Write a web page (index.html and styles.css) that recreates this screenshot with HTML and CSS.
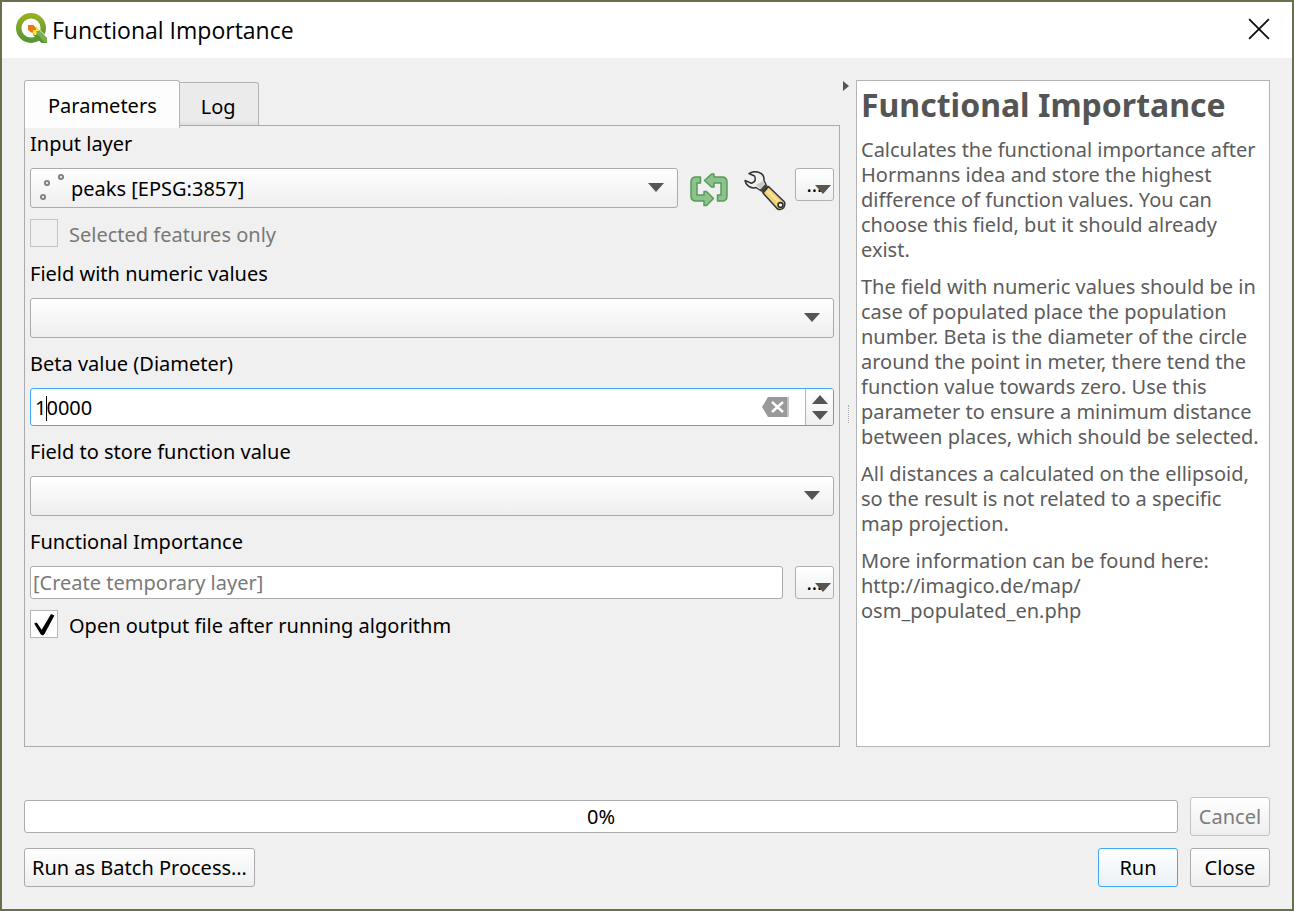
FILE: index.html
```html
<!DOCTYPE html>
<html lang="en">
<head>
<meta charset="utf-8">
<title>Functional Importance</title>
<link rel="stylesheet" href="styles.css">
</head>
<body>
<main class="window">
  <header class="titlebar">
    <svg class="logo" viewBox="0 0 32 32" aria-hidden="true">
      <defs><linearGradient id="g" x1="0" y1="0" x2="0" y2="1"><stop offset="0" stop-color="#93b023"/><stop offset="1" stop-color="#589632"/></linearGradient></defs>
      <circle cx="16" cy="15" r="12.300" fill="none" stroke="url(#g)" stroke-width="5.400"/>
      <path d="M17 19l5-5 10 10v7h-5z" fill="#fff"/>
      <path d="M18 18v4l8.500 8H32v-5l-8-8h-4z" fill="#589632"/>
      <path d="M19 18l3-2.500L32 25.500V29l-2 .5z" fill="#7dac54"/>
      <path d="M16 16h5v-3l3 3v2h-2.500v4H19l-3-3z" fill="#f0e64a"/>
      <path d="M13 12h5.500l2.500 3v2h-3v2.500h-2L13 17z" fill="#ee7913"/>
    </svg>
    <h1 class="title">Functional Importance</h1>
    <button class="close-x" type="button" aria-label="Close window">
      <svg viewBox="0 0 20 20" aria-hidden="true"><path d="M1 1l18 18M19 1L1 19" stroke="#111" stroke-width="1.700"/></svg>
    </button>
  </header>

  <div class="content">
    <div class="columns">
      <section class="left">
        <div class="tabs" role="tablist">
          <button class="tab active" type="button" role="tab" aria-selected="true">Parameters</button>
          <button class="tab" type="button" role="tab" aria-selected="false">Log</button>
        </div>
        <div class="panel" role="tabpanel">
          <div class="field">
            <label for="layer">Input layer</label>
            <div class="row">
              <div class="combo with-icon">
                <select id="layer"><option>peaks [EPSG:3857]</option></select>
                <svg class="points" viewBox="0 0 24 28" aria-hidden="true"><g fill="none" stroke="#858585" stroke-width="2"><circle cx="3" cy="23" r="2.100"/><circle cx="7" cy="9" r="2.100"/><circle cx="21" cy="3" r="2.100"/></g></svg>
                <svg class="arrow" viewBox="0 0 16 9" aria-hidden="true"><path d="M0 0h16L8 9z"/></svg>
              </div>
              <button class="tool" type="button" aria-label="Iterate over this layer">
                <svg class="iterate" viewBox="0 0 38 34" aria-hidden="true">
                  <g fill="#8ec28d" stroke="#569b59" stroke-width="1.500" stroke-linejoin="round">
                    <path d="M10.500 4H6Q1 4 1 9V23Q1 28 6 28H14V32.500h2.500L23.500 25.500 16.500 18.500H14V22H7V10h3.500z"/>
                    <path d="M27.500 28H32Q37 28 37 23V9Q37 4 32 4H24V1h-2.500L14.500 7.500 21.500 14H24V10h7V22h-3.500z"/>
                  </g>
                </svg>
              </button>
              <button class="tool" type="button" aria-label="Advanced options">
                <svg class="wrench" viewBox="0 0 42 40" aria-hidden="true">
                  <path d="M1 9.500Q2 14 6 16q3 1.500 6 .5l4.500 3L22 13.500l-2-4Q20.500 3 14.500 1.200 9 -.3 5 2.500L10.500 5Q12 8 10.500 10.500L7.500 12.300z" fill="#f0f0ee" stroke="#333" stroke-width="1.500" stroke-linejoin="round"/>
                  <path d="M12 14l5 4 4-5-2-3z" fill="#c9c9c5"/>
                  <path d="M16 19.500l5.500-6.500 3.500 3-5.500 6.500z" fill="#444"/>
                  <path d="M19 22l5.500-6.500 16 15.500q1 3-1 6-3 2.500-6 1z" fill="#f0d477" stroke="#333" stroke-width="1.500" stroke-linejoin="round"/>
                  <path d="M23.500 20l11 10.500" stroke="#f8e59c" stroke-width="2"/>
                  <circle cx="36.500" cy="34" r="2.400" fill="#fff" stroke="#333" stroke-width="1.700"/>
                </svg>
              </button>
              <button class="more" type="button" aria-label="More input options">…<svg viewBox="0 0 16 9" aria-hidden="true"><path d="M0 0h16L8 9z"/></svg></button>
            </div>
          </div>
          <label class="check disabled"><input type="checkbox" disabled>Selected features only</label>
          <div class="field">
            <label for="numeric">Field with numeric values</label>
            <div class="combo">
              <select id="numeric"><option></option></select>
              <svg class="arrow" viewBox="0 0 16 9" aria-hidden="true"><path d="M0 0h16L8 9z"/></svg>
            </div>
          </div>
          <div class="field">
            <label for="beta">Beta value (Diameter)</label>
            <div class="spin">
              <div class="entry">
                <input id="beta" type="text" value="10000">
                <span class="caret"></span>
              </div>
              <button class="clear" type="button" aria-label="Clear value">
                <svg viewBox="0 0 27 20" aria-hidden="true"><path d="M0 10L6 0h21v20H6z" fill="#999"/><path d="M25 0h2v20h-2z" fill="#c4c4c4"/><path d="M10 5l11 10M21 5L10 15" stroke="#fff" stroke-width="2.500"/></svg>
              </button>
              <div class="steps">
                <button type="button" aria-label="Increase"><svg viewBox="0 0 16 9" aria-hidden="true"><path d="M0 9h16L8 0z"/></svg></button>
                <button type="button" aria-label="Decrease"><svg viewBox="0 0 16 9" aria-hidden="true"><path d="M0 0h16L8 9z"/></svg></button>
              </div>
            </div>
          </div>
          <div class="field">
            <label for="store">Field to store function value</label>
            <div class="combo">
              <select id="store"><option></option></select>
              <svg class="arrow" viewBox="0 0 16 9" aria-hidden="true"><path d="M0 0h16L8 9z"/></svg>
            </div>
          </div>
          <div class="field">
            <label for="output">Functional Importance</label>
            <div class="row">
              <input class="output" id="output" type="text" placeholder="[Create temporary layer]">
              <button class="more" type="button" aria-label="More output options">…<svg viewBox="0 0 16 9" aria-hidden="true"><path d="M0 0h16L8 9z"/></svg></button>
            </div>
          </div>
          <label class="check"><input type="checkbox" checked>Open output file after running algorithm</label>
        </div>
      </section>

      <div class="splitter">
        <button class="collapse" type="button" aria-label="Collapse help"><svg viewBox="0 0 6 10" aria-hidden="true"><path d="M0 0l6 5-6 5z"/></svg></button>
        <span class="grip"></span>
      </div>

      <article class="help">
        <h2>Functional Importance</h2>
        <p>Calculates the functional importance after<br>Hormanns idea and store the highest<br>difference of function values. You can<br>choose this field, but it should already<br>exist.</p>
        <p>The field with numeric values should be in<br>case of populated place the population<br>number. Beta is the diameter of the circle<br>around the point in meter, there tend the<br>function value towards zero. Use this<br>parameter to ensure a minimum distance<br>between places, which should be selected.</p>
        <p>All distances a calculated on the ellipsoid,<br>so the result is not related to a specific<br>map projection.</p>
        <p>More information can be found here:<br>http://imagico.de/map/<br>osm_populated_en.php</p>
      </article>
    </div>

    <footer class="footer">
      <div class="row">
        <div class="progress" role="progressbar" aria-label="Progress" aria-valuenow="0" aria-valuemin="0" aria-valuemax="100">0%</div>
        <button class="btn" type="button" disabled>Cancel</button>
      </div>
      <div class="row">
        <button class="btn batch" type="button">Run as Batch Process…</button>
        <button class="btn primary" type="button">Run</button>
        <button class="btn" type="button">Close</button>
      </div>
    </footer>
  </div>
</main>
</body>
</html>
```
FILE: styles.css
```css
* { box-sizing: border-box; }

body {
  margin: 0;
  min-height: 100vh;
  display: flex;
  padding: 2px;
  background: #66704f;
  color: #000;
  font-family: "Noto Sans", sans-serif;
  font-size: 20px;
}

button, input, select { font: inherit; color: inherit; }
button { padding: 0; }
svg { display: block; fill: #555; }

.window {
  flex: 1;
  display: flex;
  flex-direction: column;
  background: #f0f0f0;
}

.titlebar {
  display: flex;
  align-items: center;
  height: 56px;
  padding: 0 22px 2px 13px;
  background: #fff;
}
.logo { width: 32px; height: 32px; }
.title {
  flex: 1;
  margin: 2px 0 0 5px;
  font-family: "Open Sans", sans-serif;
  font-size: 23px;
  font-weight: 400;
}
.close-x { border: 0; background: none; }
.close-x svg { width: 22px; height: 22px; }

.content {
  flex: 1;
  display: flex;
  flex-direction: column;
  padding: 22px;
}
.columns {
  flex: 1;
  display: grid;
  grid-template-columns: 816fr 16px 414fr;
}
.left { display: flex; flex-direction: column; min-width: 0; }

.tabs { display: flex; align-items: flex-end; height: 45px; }
.tab {
  height: 43px;
  padding: 4px 22px 0 21px;
  border: 1px solid #b4b4b4;
  border-width: 1px 1px 0 0;
  border-radius: 0 3px 0 0;
  background: linear-gradient(#ebebeb 90%, #dedede);
}
.tab.active {
  z-index: 1;
  height: 48px;
  margin-bottom: -3px;
  padding: 2px 22px 0 23px;
  border-left-width: 1px;
  border-radius: 3px 3px 0 0;
  background: #fdfdfd;
}

.panel {
  flex: 1;
  display: flex;
  flex-direction: column;
  gap: 11px;
  padding: 3px 5px;
  border: 1px solid #ababab;
}
.field { display: flex; flex-direction: column; gap: 9px; }
.field > label { line-height: 30px; }
.row { display: flex; align-items: flex-start; gap: 12px; }

.combo { position: relative; }
.combo select {
  appearance: none;
  display: block;
  width: 100%;
  height: 40px;
  padding: 0 36px 0 8px;
  border: 1px solid #ababab;
  border-radius: 3px;
  background: linear-gradient(#fff, #eee);
}
.combo .arrow {
  position: absolute;
  top: 15px;
  right: 14px;
  width: 16px;
  height: 9px;
  pointer-events: none;
}
.with-icon { flex: 1; }
.with-icon select { padding-left: 40px; }
.points {
  position: absolute;
  top: 6px;
  left: 10px;
  width: 24px;
  height: 28px;
}

.tool { height: 40px; padding-top: 3px; border: 0; background: none; }
.iterate { width: 38px; height: 34px; margin-right: 4px; }
.wrench { width: 42px; height: 40px; }
.tool + .more { margin-left: -3px; }
.more {
  position: relative;
  width: 39px;
  height: 33px;
  border: 1px solid #b0b0b0;
  border-radius: 3px;
  background: linear-gradient(#fff, #efefef);
  line-height: 30px;
}
.more svg {
  position: absolute;
  right: 2px;
  bottom: 6px;
  width: 16px;
  height: 9px;
}

.check { display: flex; gap: 11px; height: 29px; line-height: 31px; }
.check input {
  appearance: none;
  width: 28px;
  height: 28px;
  margin: 0;
  border: 1px solid #b8b8b8;
  background: #fff;
}
.check input:checked::before {
  content: "";
  display: block;
  width: 26px;
  height: 26px;
  background: #000;
  clip-path: polygon(12% 48%, 22% 44%, 41% 72%, 77% 12%, 90% 17%, 52% 88%, 46% 94%, 38% 90%);
}
.disabled { color: #787878; }
.disabled input { border-color: #c4c4c4; background: #f0f0f0; }

.spin {
  display: flex;
  align-items: center;
  height: 38px;
  border: 1px solid #3fa9f5;
  border-radius: 3px;
  background: #fff;
}
.entry { position: relative; flex: 1; }
.entry input {
  display: block;
  width: 100%;
  height: 36px;
  padding: 0 4px;
  border: 0;
  outline: 0;
  background: none;
}
.caret {
  position: absolute;
  top: 7px;
  left: 15px;
  width: 1px;
  height: 25px;
  background: #000;
}
.clear { border: 0; background: none; }
.clear svg { width: 27px; height: 20px; }
.steps {
  align-self: stretch;
  display: flex;
  flex-direction: column;
  justify-content: center;
  gap: 7px;
  width: 28px;
  margin-left: 16px;
  border-left: 1px solid #b4b4b4;
  border-radius: 0 2px 2px 0;
  background: linear-gradient(#fff, #efefef);
}
.steps button { align-self: center; border: 0; background: none; }
.steps svg { width: 16px; height: 9px; }

.output {
  flex: 1;
  min-width: 0;
  height: 33px;
  padding: 0 2px;
  border: 1px solid #ababab;
  border-radius: 3px;
  background: #fff;
}
.output::placeholder { color: #7a7a7a; opacity: 1; }

.splitter {
  display: flex;
  flex-direction: column;
  align-items: center;
  justify-content: space-between;
}
.collapse { align-self: flex-start; padding-left: 3px; border: 0; background: none; }
.collapse svg { width: 6px; height: 12px; }
.splitter::after { content: ""; height: 12px; }
.grip { height: 18px; border-left: 1px dotted #a8a8a8; }

.help {
  padding: 4px 0 0 4px;
  border: 1px solid #b4b4b4;
  background: #fff;
  color: #5c5c5c;
  line-height: 25px;
  white-space: nowrap;
}
.help h2 {
  margin: 0 0 13px;
  color: #555;
  font-size: 32px;
  line-height: 39px;
}
.help p { margin: 0 0 12px; }

.footer {
  display: flex;
  flex-direction: column;
  gap: 12px;
  margin-top: 50px;
}
.footer .row { align-items: center; }
.progress {
  flex: 1;
  height: 33px;
  border: 1px solid #ababab;
  border-radius: 3px;
  background: #fff;
  line-height: 32px;
  text-align: center;
}
.btn {
  min-width: 80px;
  height: 39px;
  padding: 0 7px;
  border: 1px solid #ababab;
  border-radius: 3px;
  background: linear-gradient(#fff, #eee);
}
.btn:disabled { border-color: #c2c2c2; color: #7c7c7c; }
.batch { margin-right: auto; }
.primary { border-color: #3fa9f5; background: linear-gradient(#fff, #ebf1f6); }
```
